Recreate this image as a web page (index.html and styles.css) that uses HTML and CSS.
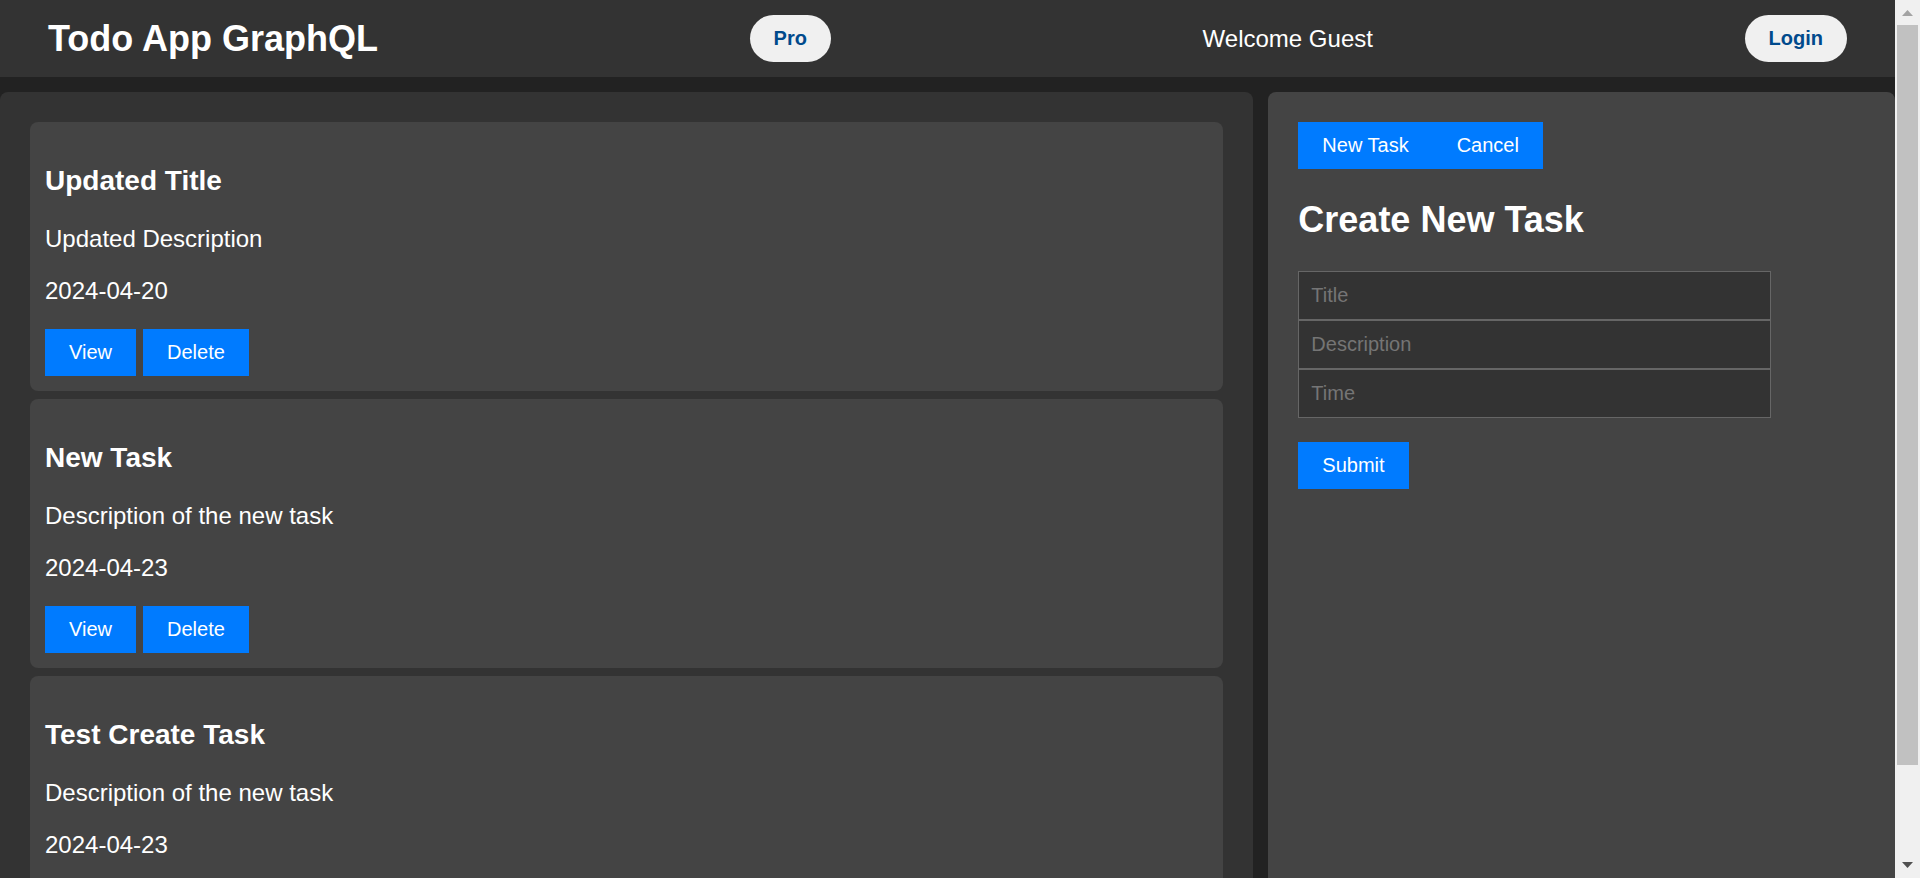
FILE: index.html
```html
<!DOCTYPE html>
<html lang="en">
<head>
<meta charset="utf-8">
<title>Todo App GraphQL</title>
<link rel="stylesheet" href="styles.css">
</head>
<body>
<div class="window">
  <div class="page">
    <header class="header">
      <h1 class="brand">Todo App GraphQL</h1>
      <button type="button" class="pill">Pro</button>
      <span class="welcome">Welcome Guest</span>
      <button type="button" class="pill">Login</button>
    </header>
    <main class="main">
      <section class="tasks">
        <article class="task">
          <h3>Updated Title</h3>
          <p>Updated Description</p>
          <p>2024-04-20</p>
          <div class="actions">
            <button type="button" class="btn">View</button>
            <button type="button" class="btn">Delete</button>
          </div>
        </article>
        <article class="task">
          <h3>New Task</h3>
          <p>Description of the new task</p>
          <p>2024-04-23</p>
          <div class="actions">
            <button type="button" class="btn">View</button>
            <button type="button" class="btn">Delete</button>
          </div>
        </article>
        <article class="task">
          <h3>Test Create Task</h3>
          <p>Description of the new task</p>
          <p>2024-04-23</p>
        </article>
      </section>
      <aside class="panel">
        <div class="tabs">
          <button type="button" class="btn">New Task</button>
          <button type="button" class="btn">Cancel</button>
        </div>
        <h2>Create New Task</h2>
        <form class="form">
          <input class="field" type="text" placeholder="Title" aria-label="Title">
          <input class="field" type="text" placeholder="Description" aria-label="Description">
          <input class="field" type="text" placeholder="Time" aria-label="Time">
          <button type="submit" class="btn submit">Submit</button>
        </form>
      </aside>
    </main>
  </div>
  <div class="scrollbar" aria-hidden="true">
    <svg class="arrow" viewBox="0 0 25 25"><path d="M7 16h11l-5.500-6z" fill="#a3a3a3"/></svg>
    <div class="track"><div class="thumb"></div></div>
    <svg class="arrow" viewBox="0 0 25 25"><path d="M7 9h11l-5.500 6z" fill="#505050"/></svg>
  </div>
</div>
</body>
</html>
```
FILE: styles.css
```css
* {
  box-sizing: border-box;
}

body {
  margin: 0;
  background: #222;
  color: #fff;
  font: 24px/27px "Liberation Sans", Arial, sans-serif;
}

h1, h2, h3, p {
  margin: 0;
}

.window {
  display: flex;
  height: 100vh;
  overflow: hidden;
}

.page {
  flex: 1;
  min-width: 0;
  overflow-y: auto;
  scrollbar-width: none;
}

.header {
  display: flex;
  justify-content: space-between;
  align-items: center;
  padding: 15px 48px;
  background: #333;
}

.brand {
  font-size: 36px;
  line-height: 41px;
}

button {
  border: 0;
  padding: 12px 24px;
  font: 20px/23px "Liberation Sans", Arial, sans-serif;
  cursor: pointer;
}

.pill {
  border-radius: 24px;
  background: #f0f0f0;
  color: #004a8c;
  font-weight: bold;
}

.btn {
  background: #007bff;
  color: #fff;
}

.main {
  display: grid;
  grid-template-columns: 2fr 1fr;
  gap: 15px;
  margin-top: 15px;
}

.tasks,
.panel {
  padding: 30px;
  border-radius: 8px;
}

.tasks {
  display: flex;
  flex-direction: column;
  gap: 8px;
  background: #333;
}

.panel {
  background: #444;
}

.task {
  min-height: 269px;
  padding: 15px;
  border-radius: 8px;
  background: #444;
}

.task h3 {
  margin: 28px 0;
  font-size: 28px;
  line-height: 32px;
}

.task p {
  margin-bottom: 25px;
}

.actions {
  display: flex;
  gap: 7px;
}

.tabs {
  display: flex;
}

.panel h2 {
  margin: 30px 0;
  font-size: 36px;
  line-height: 42px;
}

.form {
  display: flex;
  flex-direction: column;
  align-items: flex-start;
}

.field {
  width: calc(80% + 19px);
  height: 49px;
  padding: 12px;
  border: 1px solid #666;
  background: #333;
  color: #fff;
  font: 20px/23px "Liberation Sans", Arial, sans-serif;
}

.field::placeholder {
  color: #757575;
}

.submit {
  margin-top: 24px;
}

.scrollbar {
  display: flex;
  flex-direction: column;
  width: 25px;
  background: #f0f0f0;
}

.arrow {
  display: block;
  width: 25px;
  height: 25px;
}

.track {
  flex: 1;
  padding: 0 2px;
}

.thumb {
  height: 89.4%;
  background: #c1c1c1;
}
```
